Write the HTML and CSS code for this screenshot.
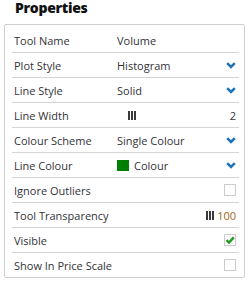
FILE: index.html
```html
<!DOCTYPE html>
<html>
<head>
<meta charset="utf-8">
<link rel="stylesheet" href="styles.css">
</head>
<body>
<div class="panel">
  <h1 class="title">Properties</h1>
  <div class="box">
    <div class="row"><span class="label">Tool Name</span><span class="value">Volume</span></div>
    <div class="row"><span class="label">Plot Style</span><span class="value">Histogram</span><svg class="chev" viewBox="0 0 10 7"><polyline points="1.2,1.2 5,5 8.8,1.2"/></svg></div>
    <div class="row"><span class="label">Line Style</span><span class="value">Solid</span><svg class="chev" viewBox="0 0 10 7"><polyline points="1.2,1.2 5,5 8.8,1.2"/></svg></div>
    <div class="row"><span class="label">Line Width</span><span class="value"><svg class="bars" viewBox="0 0 8 9"><rect x="0" y="0" width="2" height="9"/><rect x="3" y="0" width="2" height="9"/><rect x="6" y="0" width="2" height="9"/></svg></span><span class="num">2</span></div>
    <div class="row"><span class="label">Colour Scheme</span><span class="value">Single Colour</span><svg class="chev" viewBox="0 0 10 7"><polyline points="1.2,1.2 5,5 8.8,1.2"/></svg></div>
    <div class="row"><span class="label">Line Colour</span><span class="value"><span class="swatch"></span>Colour</span><svg class="chev" viewBox="0 0 10 7"><polyline points="1.2,1.2 5,5 8.8,1.2"/></svg></div>
    <div class="row"><span class="label">Ignore Outliers</span><span class="value"></span><span class="check"></span></div>
    <div class="row"><span class="label">Tool Transparency</span><span class="value"></span><svg class="bars" viewBox="0 0 8 9"><rect x="0" y="0" width="2" height="9"/><rect x="3" y="0" width="2" height="9"/><rect x="6" y="0" width="2" height="9"/></svg><span class="num amber">100</span></div>
    <div class="row"><span class="label">Visible</span><span class="value"></span><span class="check"><svg viewBox="0 0 12 12"><polyline points="2.5,6.2 5,8.6 9.8,3.4"/></svg></span></div>
    <div class="row"><span class="label">Show In Price Scale</span><span class="value"></span><span class="check"></span></div>
  </div>
</div>
</body>
</html>
```

FILE: styles.css
```css
html, body {
  margin: 0;
  padding: 0;
  background: #ffffff;
}
body {
  font-family: "Open Sans", "Liberation Sans", sans-serif;
  color: #333338;
}
.panel {
  padding: 0 6px 0 4px;
}
.title {
  margin: 0;
  padding: 0 0 0 11px;
  height: 24px;
  font-size: 14px;
  line-height: 15px;
  letter-spacing: -0.3px;
  font-weight: 800;
  color: #111111;
}
.box {
  border: 1px solid #cfcfcf;
  border-radius: 2px;
  padding: 3px 5px 0 7px;
  box-sizing: border-box;
  height: 254px;
}
.row {
  display: flex;
  align-items: center;
  height: 24px;
  padding: 0 3px 0 2px;
  border-bottom: 1px solid #d4d4d4;
  font-size: 11px;
}
.row:last-child {
  border-bottom: none;
}
.label {
  width: 103px;
  flex: none;
  white-space: nowrap;
}
.value {
  flex: 1;
  display: flex;
  align-items: center;
  white-space: nowrap;
}
.chev {
  width: 10px;
  height: 7px;
  flex: none;
}
.chev polyline {
  fill: none;
  stroke: #1f74b8;
  stroke-width: 2.6;
  stroke-linecap: butt;
  stroke-linejoin: miter;
}
.bars {
  width: 8px;
  height: 9px;
  flex: none;
  fill: #3a3a3a;
}
.value .bars {
  margin-left: 11px;
}
.num {
  margin-left: 3px;
}
.amber {
  color: #9a6420;
}
.swatch {
  display: inline-block;
  width: 12px;
  height: 11px;
  background: #008000;
  margin-right: 5px;
}
.check {
  width: 12px;
  height: 12px;
  box-sizing: border-box;
  border: 1px solid #cccccc;
  background: #ffffff;
  flex: none;
  position: relative;
}
.check svg {
  position: absolute;
  left: -1px;
  top: -1px;
  width: 12px;
  height: 12px;
}
.check polyline {
  fill: none;
  stroke: #1f9a1f;
  stroke-width: 2.4;
}
```
